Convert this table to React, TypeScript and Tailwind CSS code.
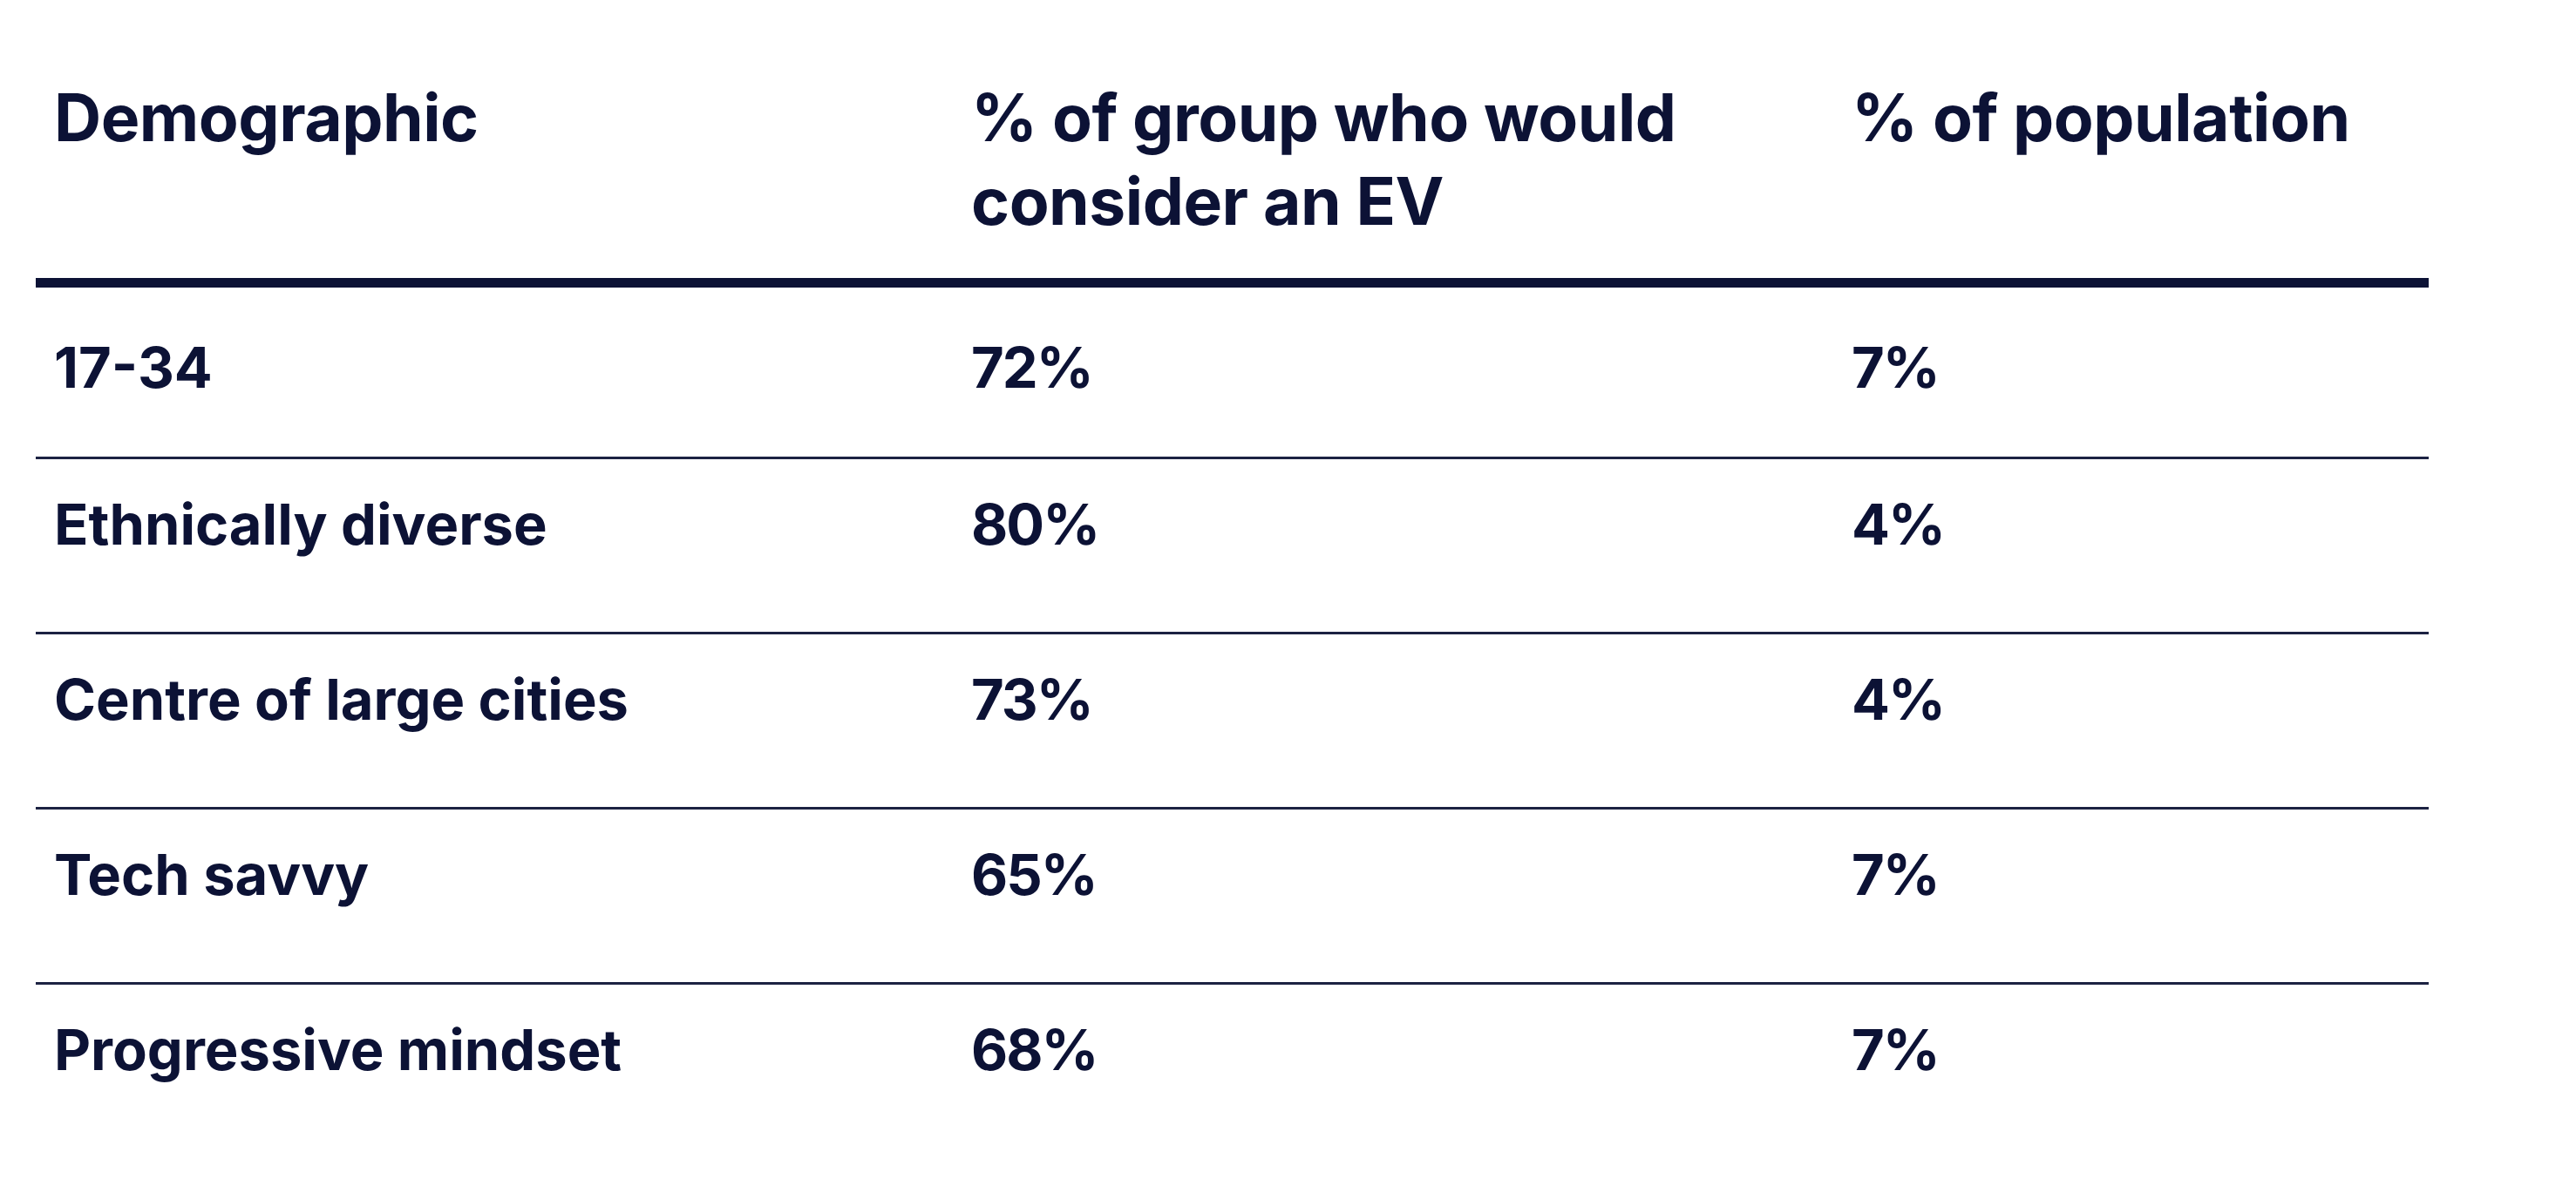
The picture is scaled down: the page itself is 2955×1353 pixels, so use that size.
import clsx from "clsx";

const rows = [
  { group: "17-34", consider: "72%", population: "7%" },
  { group: "Ethnically diverse", consider: "80%", population: "4%" },
  { group: "Centre of large cities", consider: "73%", population: "4%" },
  { group: "Tech savvy", consider: "65%", population: "7%" },
  { group: "Progressive mindset", consider: "68%", population: "7%" },
];

const App = () => {
  return (
    <div className="min-h-screen bg-white font-['Inter',sans-serif] text-[#0c1235]">
      <div className="ml-[41px] w-[2745px]">
        <div className="grid grid-cols-[1052px_1010px_683px] border-b-[11px] border-[#0c1235] pt-[87px] pb-[40px] text-[75px] font-bold leading-[96px] tracking-[-0.5px]">
          <div className="px-[21px]">Demographic</div>
          <div className="px-[21px]">% of group who would consider an EV</div>
          <div className="px-[21px]">% of population</div>
        </div>
        {rows.map((row, index) => (
          <div
            key={row.group}
            className={clsx(
              "grid grid-cols-[1052px_1010px_683px] text-[65px] font-bold leading-[76px]",
              index === 0 ? "h-[197px] pt-[54px]" : "h-[201px] pt-[37px]",
              index < rows.length - 1 && "border-b-[3px] border-[#1c2242]"
            )}
          >
            <div className="px-[21px]">{row.group}</div>
            <div className="px-[21px] tracking-[-2px]">{row.consider}</div>
            <div className="px-[21px] tracking-[-2px]">{row.population}</div>
          </div>
        ))}
      </div>
    </div>
  );
};

export default App;
